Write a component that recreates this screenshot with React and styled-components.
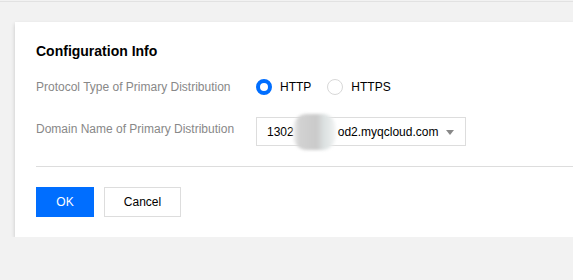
import React from 'react';
import styled, { createGlobalStyle } from 'styled-components';

const GlobalStyle = createGlobalStyle`
    html, body {
        margin: 0;
        padding: 0;
        background: #f2f2f2;
        overflow: hidden;
    }

    body {
        font-family: "Liberation Sans", Arial, sans-serif;
        font-size: 12px;
        color: #000;
    }
`;

const TopRule = styled.div`
    height: 1px;
    margin-top: 1px;
    background: #e2e2e2;
`;

const Card = styled.div`
    margin: 20px 0 0 15px;
    padding: 20px 0 20px 21px;

    background: #fff;
    box-shadow: 0 2px 4px rgba(0, 0, 0, 0.18);
`;

const Title = styled.h3`
    margin: 0;

    font-size: 14px;
    line-height: 19px;
    font-weight: 700;
    color: #000;
`;

const Form = styled.div`
    margin-top: 16px;

    display: flex;
    flex-direction: column;
    gap: 20px;
`;

const Row = styled.div`
    display: flex;
    align-items: ${({ $top }) => ($top ? 'flex-start' : 'center')};
`;

const Label = styled.div`
    width: 220px;
    padding-top: ${({ $offset }) => $offset || 0}px;

    color: #888;
    font-size: 12px;
    line-height: 18px;
`;

const RadioGroup = styled.div`
    display: flex;
    align-items: center;
    gap: 16px;
`;

const Radio = styled.label`
    display: flex;
    align-items: center;
    gap: 8px;

    font-size: 12px;
    line-height: 20px;
    color: #000;
`;

const Dot = styled.span`
    width: 16px;
    height: 16px;
    box-sizing: border-box;

    border-radius: 50%;
    border: ${({ $checked }) => ($checked ? '4px solid #006eff' : '1px solid #d8d8d8')};
    background: #fff;
`;

const Select = styled.div`
    position: relative;
    width: 210px;
    height: 29px;
    box-sizing: border-box;
    padding: 0 10px;

    display: flex;
    align-items: center;

    border: 1px solid #dddddd;
    background: #fff;

    font-size: 12px;
    color: #000;
    white-space: nowrap;
`;

const Blur = styled.span`
    display: inline-block;
    width: 43px;
    height: 36px;
    margin: 0 2px 0 -1px;

    background: linear-gradient(90deg, #f4f4f4 0%, #d2d2d2 14%, #cacaca 55%, #dce1e1 72%, #e4e8e8 85%, #f6f7f7 100%);
    border-radius: 14px;
    filter: blur(1.5px);
`;

const Caret = styled.span`
    position: absolute;
    right: 11px;
    top: 12px;

    border-left: 4px solid transparent;
    border-right: 4px solid transparent;
    border-top: 5px solid #888;
`;

const Divider = styled.div`
    margin-top: 20px;
    height: 1px;
    background: #dddddd;
`;

const Actions = styled.div`
    margin-top: 20px;

    display: flex;
    gap: 10px;
`;

const Button = styled.button`
    height: 30px;
    padding: 0;
    box-sizing: border-box;

    width: ${({ $width }) => $width}px;

    border: 1px solid ${({ $primary }) => ($primary ? '#006eff' : '#dddddd')};
    background: ${({ $primary }) => ($primary ? '#006eff' : '#fff')};
    border-radius: 0;

    font-family: inherit;
    font-size: 12px;
    color: ${({ $primary }) => ($primary ? '#fff' : '#000')};
    cursor: pointer;
`;

export default function App() {
    return (
        <>
            <GlobalStyle />
            <TopRule />
            <Card>
                <Title>Configuration Info</Title>
                <Form>
                    <Row>
                        <Label>Protocol Type of Primary Distribution</Label>
                        <RadioGroup>
                            <Radio><Dot $checked />HTTP</Radio>
                            <Radio><Dot />HTTPS</Radio>
                        </RadioGroup>
                    </Row>
                    <Row $top>
                        <Label $offset={3}>Domain Name of Primary Distribution</Label>
                        <Select>
                            1302<Blur />od2.myqcloud.com
                            <Caret />
                        </Select>
                    </Row>
                </Form>
                <Divider />
                <Actions>
                    <Button $primary $width={58}>OK</Button>
                    <Button $width={77}>Cancel</Button>
                </Actions>
            </Card>
        </>
    );
}
